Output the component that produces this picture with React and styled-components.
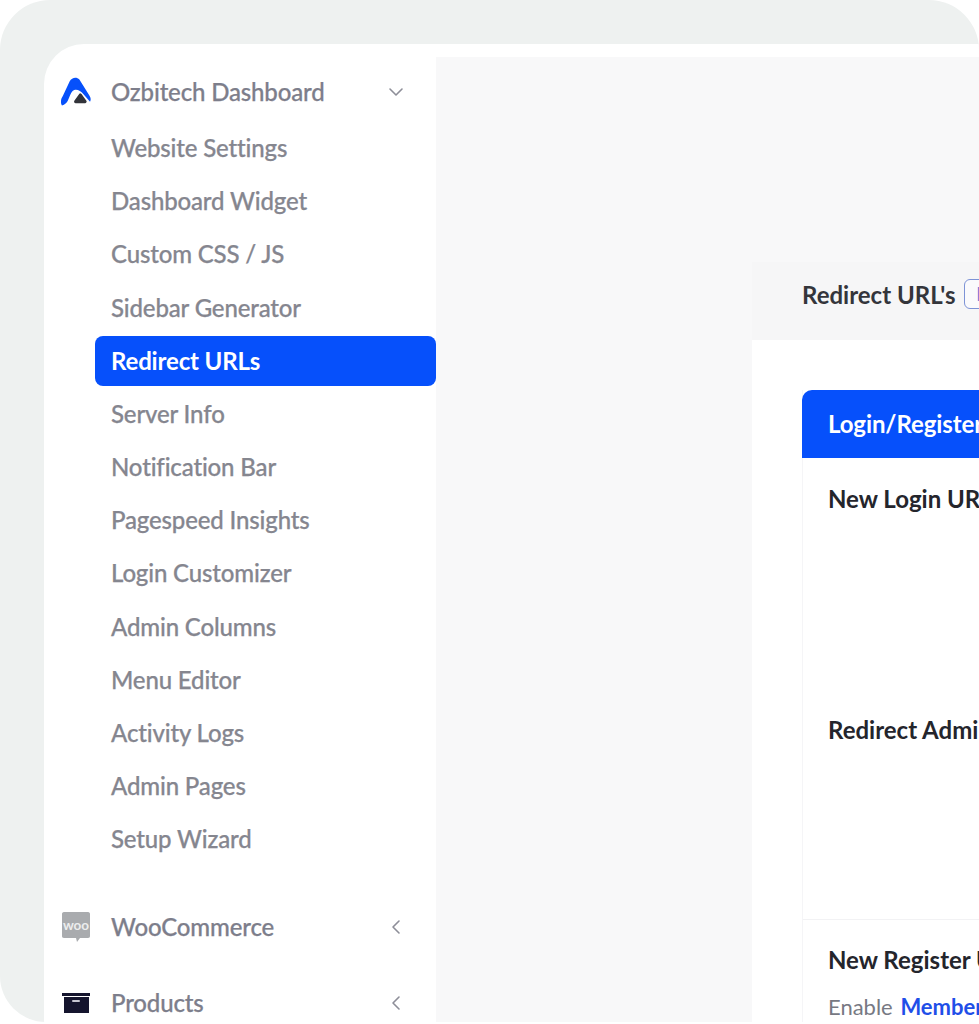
import React from 'react';
import styled, { createGlobalStyle } from 'styled-components';

const GlobalStyle = createGlobalStyle`
  html, body {
    margin: 0;
    padding: 0;
    background: #fff;
  }
  body {
    font-family: "Lato", "Open Sans", sans-serif;
  }
`;

const Frame = styled.div`
  width: 979px;
  height: 1022px;
  box-sizing: border-box;
  padding: 44px 0 0 44px;
  background: #eef1f0;
  border-radius: 50px 50px 0 46px;
  overflow: hidden;
`;

const Window = styled.div`
  display: flex;
  height: 978px;
  background: #fff;
  border-top-left-radius: 40px;
  overflow: hidden;
`;

const Sidebar = styled.aside`
  width: 392px;
  flex-shrink: 0;
  box-sizing: border-box;
  padding-top: 21px;
`;

const TopItem = styled.div`
  display: flex;
  align-items: center;
  height: 53px;
  padding: 0 32px 0 17px;
  margin-bottom: ${p => p.$gap || 0}px;
`;

const IconSlot = styled.div`
  width: 30px;
  height: 32px;
  margin-right: 20px;
  display: flex;
  align-items: center;
  justify-content: center;
`;

const TopLabel = styled.span`
  flex: 1;
  font-size: 24px;
  font-weight: 500;
  letter-spacing: -0.15px;
  -webkit-text-stroke: 0.25px #7d7e8b;
  color: #7d7e8b;
`;

const SubList = styled.div`
  display: flex;
  flex-direction: column;
  padding: 3px 0 0 51px;
  margin-bottom: 35px;
`;

const SubItem = styled.div`
  height: ${p => (p.$active ? 50 : 53.2)}px;
  margin: ${p => (p.$active ? '2px 0 1px' : 0)};
  display: flex;
  align-items: center;
  padding-left: 16px;
  font-size: 24px;
  font-weight: ${p => (p.$active ? 700 : 500)};
  letter-spacing: -0.15px;
  -webkit-text-stroke: ${p => (p.$active ? '0' : '0.25px #85868f')};
  color: ${p => (p.$active ? '#fff' : '#85868f')};
  background: ${p => (p.$active ? '#0650fb' : 'transparent')};
  border-radius: 8px;
`;

const Main = styled.main`
  flex: 1;
  margin-top: 13px;
  background: #f8f8f9;
  padding: 205px 0 0 316px;
  overflow: hidden;
`;

const PageHeader = styled.div`
  display: flex;
  align-items: center;
  gap: 8px;
  height: 78px;
  box-sizing: border-box;
  padding: 0 0 14px 50px;
  background: #f6f6f7;
`;

const PageTitle = styled.h1`
  margin: 0;
  font-size: 24px;
  font-weight: 700;
  color: #34353b;
  white-space: nowrap;
`;

const Badge = styled.span`
  height: 30px;
  flex-shrink: 0;
  box-sizing: border-box;
  padding: 0 12px;
  display: flex;
  align-items: center;
  border: 1.5px solid #7d93d6;
  border-radius: 6px;
  background: #fafafc;
  font-size: 18px;
  font-weight: 700;
  color: #7a74d6;
`;

const Panel = styled.section`
  background: #fff;
  padding: 50px 0 0 50px;
  height: 640px;
`;

const Card = styled.div`
  border-left: 1px solid #f5f5f7;
  width: 400px;
`;

const CardHead = styled.div`
  height: 68px;
  box-sizing: border-box;
  margin-left: -1px;
  display: flex;
  align-items: center;
  padding: 0 0 2px 26px;
  background: #0650fb;
  border-radius: 10px 0 0 0;
  font-size: 24px;
  font-weight: 700;
  letter-spacing: -0.1px;
  color: #fff;
  white-space: nowrap;
`;

const Field = styled.div`
  height: ${p => p.$h}px;
  box-sizing: border-box;
  padding: ${p => p.$top}px 0 0 25px;
  border-bottom: ${p => (p.$line ? '1px solid #f2f2f4' : 'none')};
`;

const FieldLabel = styled.div`
  font-size: 24px;
  line-height: 30px;
  font-weight: 700;
  color: #24252c;
  white-space: nowrap;
`;

const FieldHint = styled.div`
  margin-top: 18px;
  font-size: 22px;
  line-height: 28px;
  color: #777983;
  white-space: nowrap;
`;

const HintLink = styled.span`
  margin-left: 2px;
  color: #1f4fe8;
  font-weight: 700;
`;

const Chevron = ({ dir }) => (
  <svg width="16" height="16" viewBox="0 0 16 16" fill="none" stroke="#8d8e98" strokeWidth="1.6" strokeLinecap="round" strokeLinejoin="round">
    {dir === 'down' ? <path d="M2 5l6 6 6-6" /> : <path d="M11 2L5 8l6 6" />}
  </svg>
);

const BrandLogo = () => (
  <svg width="31" height="30" viewBox="0 0 31 30">
    <path d="M1 29C-1 26 0 22 2 19L9 4C11 0 16-1 19 2L29 18C31 21 31 23 30 25L23 17C20 13 15 11 12 14C10 16 9 20 7 24C6 26 4 28 1 29Z" fill="#0650fb" />
    <path d="M20 18L25 25H15Z" fill="#33343a" stroke="#33343a" strokeWidth="3" strokeLinejoin="round" />
  </svg>
);

const WooIcon = () => (
  <svg width="30" height="32" viewBox="0 0 30 32">
    <path d="M3 1H27C28.500 1 29 2 29 3V25C29 26 28.500 27 27 27H19L16 31L15 27H3C1.500 27 1 26 1 25V3C1 2 1.500 1 3 1Z" fill="#a9abae" />
    <text x="15" y="18.500" textAnchor="middle" fontFamily="Lato, sans-serif" fontSize="13.500" fontWeight="700" fill="#eceded">woo</text>
  </svg>
);

const ArchiveIcon = () => (
  <svg width="29" height="20" viewBox="0 0 29 20">
    <rect x="0" y="0" width="28" height="3" fill="#15152e" />
    <rect x="2" y="4" width="25" height="16" fill="#15152e" />
    <rect x="10" y="7" width="8" height="2" rx="1" fill="#c7c7d2" />
  </svg>
);

const links = [
  'Website Settings',
  'Dashboard Widget',
  'Custom CSS / JS',
  'Sidebar Generator',
  'Redirect URLs',
  'Server Info',
  'Notification Bar',
  'Pagespeed Insights',
  'Login Customizer',
  'Admin Columns',
  'Menu Editor',
  'Activity Logs',
  'Admin Pages',
  'Setup Wizard',
];

export default function App() {
  return (
    <>
      <GlobalStyle />
      <Frame>
        <Window>
          <Sidebar>
            <TopItem>
              <IconSlot><BrandLogo /></IconSlot>
              <TopLabel>Ozbitech Dashboard</TopLabel>
              <Chevron dir="down" />
            </TopItem>
            <SubList>
              {links.map(l => (
                <SubItem key={l} $active={l === 'Redirect URLs'}>{l}</SubItem>
              ))}
            </SubList>
            <TopItem $gap={23}>
              <IconSlot><WooIcon /></IconSlot>
              <TopLabel>WooCommerce</TopLabel>
              <Chevron dir="left" />
            </TopItem>
            <TopItem>
              <IconSlot><ArchiveIcon /></IconSlot>
              <TopLabel>Products</TopLabel>
              <Chevron dir="left" />
            </TopItem>
          </Sidebar>
          <Main>
            <PageHeader>
              <PageTitle>Redirect URL's</PageTitle>
              <Badge>Help</Badge>
            </PageHeader>
            <Panel>
              <Card>
                <CardHead>Login/Register URLs</CardHead>
                <Field $h={231} $top={26}>
                  <FieldLabel>New Login URL</FieldLabel>
                </Field>
                <Field $h={231} $top={26} $line>
                  <FieldLabel>Redirect Admin</FieldLabel>
                </Field>
                <Field $h={120} $top={25}>
                  <FieldLabel>New Register URL</FieldLabel>
                  <FieldHint>Enable <HintLink>Membership</HintLink></FieldHint>
                </Field>
              </Card>
            </Panel>
          </Main>
        </Window>
      </Frame>
    </>
  );
}
